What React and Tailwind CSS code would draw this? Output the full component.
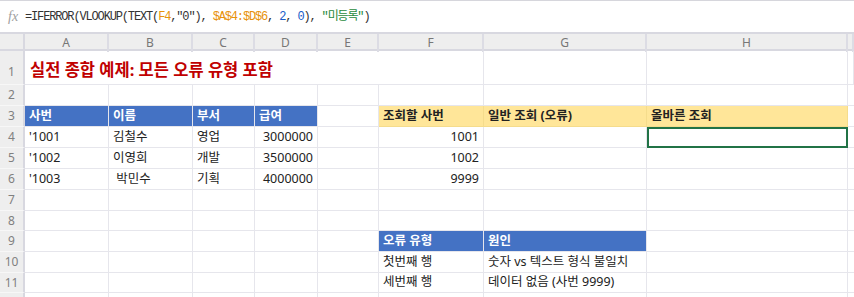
import React from 'react';

/* column widths in px: row header, A..H, then the sliver of I */
const COLS = 'grid-cols-[25px_84px_84px_62px_63px_61px_105px_163px_201px_1fr]';
const LETTERS = ['A', 'B', 'C', 'D', 'E', 'F', 'G', 'H', ''];

const FONT = { fontFamily: '"Noto Sans", "Noto Sans CJK KR", sans-serif' };

const BLUE = 'bg-[#4472c4] text-white font-bold border-[#6a8fd2]';
const YELLOW = 'bg-[#ffe699] text-[#222] font-bold border-[#f5dc8c]';

// cell spec: [text, extra classes]
const ROWS = [
  { n: 1, h: 'h-[34px]', title: true },
  { n: 2, h: 'h-[21px]', cells: {} },
  {
    n: 3, h: 'h-[21px]', cells: {
      A: ['사번', BLUE], B: ['이름', BLUE], C: ['부서', BLUE], D: ['급여', BLUE],
      F: ['조회할 사번', YELLOW], G: ['일반 조회 (오류)', YELLOW], H: ['올바른 조회', YELLOW],
    },
  },
  {
    n: 4, h: 'h-[21px]', cells: {
      A: ["'1001"], B: ['김철수'], C: ['영업'], D: ['3000000', 'justify-end'],
      F: ['1001', 'justify-end'], H: ['', 'outline-2 outline-[#217346] -outline-offset-2'],
    },
  },
  {
    n: 5, h: 'h-[21px]', cells: {
      A: ["'1002"], B: ['이영희'], C: ['개발'], D: ['3500000', 'justify-end'],
      F: ['1002', 'justify-end'],
    },
  },
  {
    n: 6, h: 'h-[21px]', cells: {
      A: ["'1003"], B: [' 박민수'], C: ['기획'], D: ['4000000', 'justify-end'],
      F: ['9999', 'justify-end'],
    },
  },
  { n: 7, h: 'h-[21px]', cells: {} },
  { n: 8, h: 'h-[20px]', cells: {} },
  { n: 9, h: 'h-[21px]', cells: { F: ['오류 유형', BLUE], G: ['원인', BLUE] } },
  { n: 10, h: 'h-[21px]', cells: { F: ['첫번째 행'], G: ['숫자 vs 텍스트 형식 불일치'] } },
  { n: 11, h: 'h-[20px]', cells: { F: ['세번째 행'], G: ['데이터 없음 (사번 9999)'] } },
  // row 12 only peeks in at the bottom edge, its number is out of view
  { n: '', h: 'h-[21px]', cells: {} },
];

function FormulaBar() {
  return (
    <div className="h-[32px] flex items-center border-t border-[#d6d6dc] bg-white">
      <span
        className="w-[25px] pl-[8px] text-[14px] italic text-[#a0a0a0]"
        style={{ fontFamily: '"Liberation Serif", serif' }}
      >
        fx
      </span>
      <span
        className="text-[12px] tracking-[-1.15px] text-[#333] whitespace-pre"
        style={{ fontFamily: '"Liberation Mono", "Noto Sans CJK KR", monospace' }}
      >
        =IFERROR(VLOOKUP(TEXT(<span className="text-[#e8920a]">F4</span>,"0"),{' '}
        <span className="text-[#e8920a]">$A$4:$D$6</span>, <span className="text-[#1a5cc8]">2</span>,{' '}
        <span className="text-[#1a5cc8]">0</span>), <span className="text-[#1f8a3c]">"미등록"</span>)
      </span>
    </div>
  );
}

function HeaderRow() {
  return (
    <div className={`grid ${COLS} h-[19px] bg-[#eeeeee] border-t-2 border-b-2 border-[#d8d8e0]`}>
      <div className="border-r-2 border-[#d8d8e0]" />
      {LETTERS.map((l, i) => (
        <div
          key={i}
          className="flex items-center justify-center text-[12px] text-[#777] border-r-2 border-[#dcdce4]"
        >
          {l}
        </div>
      ))}
    </div>
  );
}

function Row({ row }) {
  return (
    <div className={`grid ${COLS} ${row.h}`}>
      <div
        className={`flex justify-center text-[12px] text-[#808080] bg-[#eeeeee] border-r-2 border-b border-r-[#d8d8e0] border-b-[#f7f7f7] ${
          row.title ? 'items-end pb-[3px]' : 'items-center'
        }`}
      >
        {row.n}
      </div>
      {row.title ? (
        <>
          <div className="col-span-5 flex items-end pb-[2px] pl-[5px] border-b border-[#e6e6ec] overflow-visible whitespace-nowrap">
            <span className="text-[16.5px] font-bold text-[#c00000] leading-[24px]">
              실전 종합 예제: 모든 오류 유형 포함
            </span>
          </div>
          {['F', 'G', 'H', 'I'].map((c) => (
            <div key={c} className="border-r border-b border-[#e6e6ec]" />
          ))}
        </>
      ) : (
        ['A', 'B', 'C', 'D', 'E', 'F', 'G', 'H', 'I'].map((c) => {
          const [text, cls = ''] = row.cells[c] || [''];
          return (
            <div
              key={c}
              className={`flex items-center px-[4px] text-[12.5px] text-[#222] whitespace-pre overflow-visible border-r border-b border-[#e6e6ec] ${cls}`}
            >
              {text}
            </div>
          );
        })
      )}
    </div>
  );
}

export default function App() {
  return (
    <div className="w-[854px] h-[297px] overflow-hidden bg-white" style={FONT}>
      <FormulaBar />
      <HeaderRow />
      {ROWS.map((r, i) => (
        <Row key={i} row={r} />
      ))}
    </div>
  );
}
